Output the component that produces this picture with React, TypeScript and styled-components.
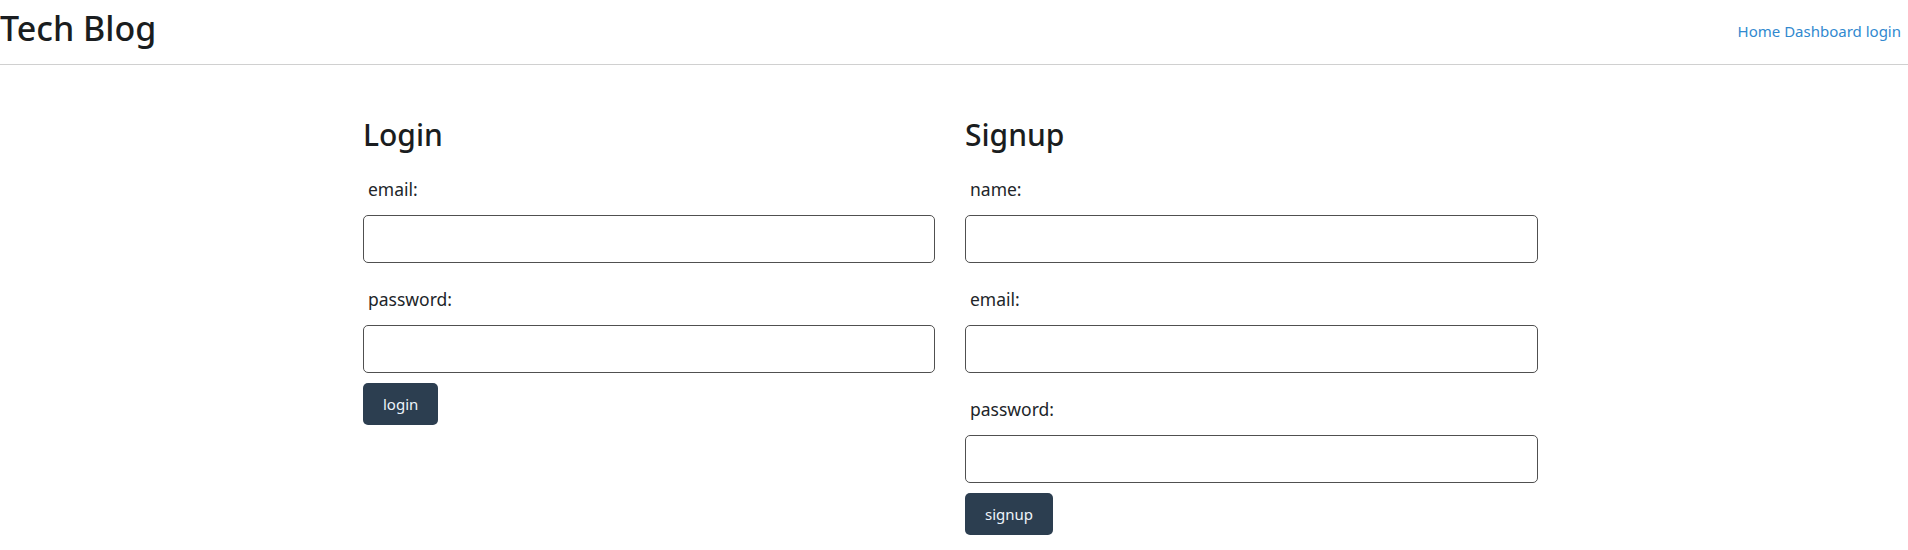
import React from 'react';
import styled, { createGlobalStyle } from 'styled-components';

const GlobalStyle = createGlobalStyle`
  html, body {
    margin: 0;
    padding: 0;
    background: #fff;
  }
  body {
    font-family: 'Noto Sans', 'Open Sans', sans-serif;
    color: #212529;
  }
  * {
    box-sizing: border-box;
  }
`;

type FieldProps = {
  label: string;
  type?: string;
};

const Field: React.FC<FieldProps> = ({ label, type = 'text' }) => {
  return (
    <FieldGroup>
      <Label>{label}</Label>
      <Input type={type} />
    </FieldGroup>
  );
};

const App: React.FC = () => {
  return (
    <>
      <GlobalStyle />
      <Header>
        <Title>Tech Blog</Title>
        <Nav>
          <a href="#">Home</a> <a href="#">Dashboard</a> <a href="#">login</a>
        </Nav>
      </Header>
      <Main>
        <Column>
          <Heading>Login</Heading>
          <Form onSubmit={(e) => e.preventDefault()}>
            <Field label="email:" type="email" />
            <Field label="password:" type="password" />
            <Button type="submit">login</Button>
          </Form>
        </Column>
        <Column>
          <Heading>Signup</Heading>
          <Form onSubmit={(e) => e.preventDefault()}>
            <Field label="name:" />
            <Field label="email:" type="email" />
            <Field label="password:" type="password" />
            <Button type="submit">signup</Button>
          </Form>
        </Column>
      </Main>
    </>
  );
};

const Header = styled.header`
  height: 65px;
  display: flex;
  align-items: flex-start;
  justify-content: space-between;
  padding: 6px 7px 0 0;
  border-bottom: 1px solid #d0d0d0;
`;

const Title = styled.h1`
  margin: 0;
  padding-top: 1px;
  font-size: 34px;
  line-height: 42px;
  font-weight: 500;
  color: #1a1d20;
`;

const Nav = styled.nav`
  padding-top: 13px;
  font-size: 15px;
  line-height: 24px;

  a {
    color: #3189cf;
    text-decoration: none;
  }
`;

const Main = styled.main`
  display: grid;
  grid-template-columns: 572px 573px;
  column-gap: 30px;
  justify-content: center;
  padding: 52px 7px 0 0;
`;

const Column = styled.section`
  display: flex;
  flex-direction: column;
`;

const Heading = styled.h2`
  margin: 0 0 22px;
  font-size: 30px;
  line-height: 36px;
  font-weight: 500;
  color: #1a1d20;
`;

const Form = styled.form`
  display: flex;
  flex-direction: column;
`;

const FieldGroup = styled.div`
  display: flex;
  flex-direction: column;

  & + & {
    margin-top: 22px;
  }
`;

const Label = styled.label`
  padding-left: 5px;
  font-size: 17.5px;
  line-height: 28px;
  color: #212529;
`;

const Input = styled.input`
  margin-top: 12px;
  width: 100%;
  height: 48px;
  border: 1px solid #505050;
  border-radius: 5px;
  background: #fff;
  font: inherit;
  padding: 0 10px;
`;

const Button = styled.button`
  align-self: flex-start;
  margin-top: 10px;
  padding: 9px 20px;
  border: none;
  border-radius: 5px;
  background: #2c3e50;
  color: #eef4fa;
  font-family: inherit;
  font-size: 15px;
  line-height: 24px;
  cursor: pointer;
`;

export default App;
